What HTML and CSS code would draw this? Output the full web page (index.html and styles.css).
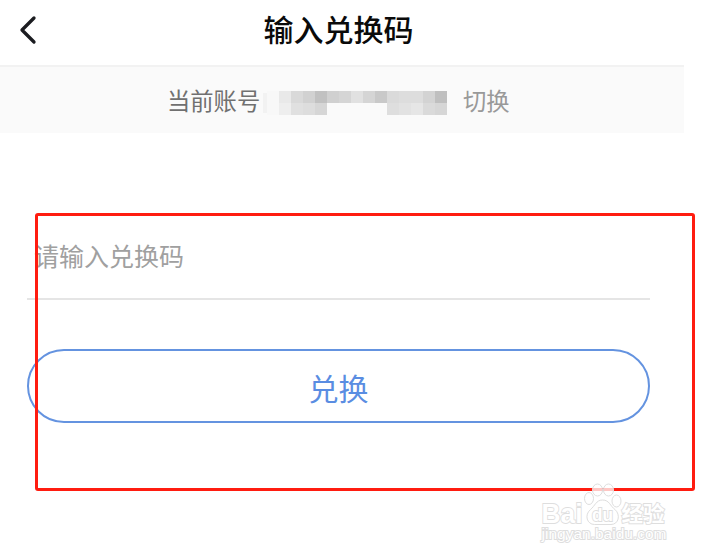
FILE: index.html
```html
<!DOCTYPE html>
<html lang="zh-CN">
<head>
  <meta charset="UTF-8">
  <meta name="viewport" content="width=device-width, initial-scale=1.0">
  <title>输入兑换码</title>
  <link rel="stylesheet" href="styles.css">
</head>
<body>
  <div class="page">
    <header class="header">
      <svg class="back" width="20" height="30" viewBox="0 0 20 30">
        <path d="M15 3 L3 15 L15 27" />
      </svg>
      <h1 class="title">输入兑换码</h1>
    </header>

    <div class="account">
      <span class="label">当前账号</span>
      <svg class="mosaic" width="184" height="24" shape-rendering="crispEdges">
        <rect x="0" y="2" width="4" height="20" fill="#f2f2f2" />
        <rect x="4" y="0" width="12" height="24" fill="#f8f8f8" />
        <rect x="16" y="0" width="12" height="12" fill="#e9e9e9" />
        <rect x="28" y="0" width="12" height="12" fill="#d9d9d9" />
        <rect x="40" y="0" width="12" height="12" fill="#d1d1d1" />
        <rect x="52" y="0" width="12" height="12" fill="#c1c1c1" />
        <rect x="64" y="0" width="12" height="12" fill="#d0d0d0" />
        <rect x="76" y="0" width="12" height="12" fill="#d5d5d5" />
        <rect x="88" y="0" width="12" height="12" fill="#e1e1e1" />
        <rect x="100" y="0" width="12" height="12" fill="#d5d5d5" />
        <rect x="112" y="0" width="12" height="12" fill="#c9c9c9" />
        <rect x="124" y="0" width="12" height="12" fill="#dadada" />
        <rect x="136" y="0" width="24" height="12" fill="#dddddd" />
        <rect x="160" y="0" width="12" height="12" fill="#d3d3d3" />
        <rect x="172" y="0" width="12" height="12" fill="#bfbfbf" />
        <rect x="16" y="12" width="12" height="12" fill="#eeeeee" />
        <rect x="28" y="12" width="12" height="12" fill="#e0e0e0" />
        <rect x="40" y="12" width="12" height="12" fill="#dddddd" />
        <rect x="52" y="12" width="12" height="12" fill="#d6d6d6" />
        <rect x="124" y="12" width="12" height="12" fill="#dedede" />
        <rect x="136" y="12" width="12" height="12" fill="#e2e2e2" />
        <rect x="148" y="12" width="12" height="12" fill="#e6e6e6" />
        <rect x="160" y="12" width="12" height="12" fill="#dadada" />
        <rect x="172" y="12" width="12" height="12" fill="#d6d6d6" />
      </svg>
      <span class="switch">切换</span>
    </div>

    <main class="form">
      <div class="field">请输入兑换码</div>
      <div class="submit">兑换</div>
    </main>
  </div>

  <div class="highlight"></div>

  <svg class="watermark" width="136" height="70" viewBox="0 0 136 70">
    <ellipse cx="53" cy="20.500" rx="4.500" ry="6" />
    <ellipse cx="61.500" cy="12" rx="5" ry="6" />
    <ellipse cx="72.500" cy="12" rx="5" ry="6" />
    <ellipse cx="80.500" cy="23" rx="4.500" ry="6" />
    <path d="M66.500 22 C60 22 59 28 54.500 31.500 C48 37 51 46.500 58.500 46.500 H75 C82.500 46.500 85 37 79 31.500 C74 28 73.500 22 66.500 22 Z" />
    <text class="brand" x="5.500" y="45" textLength="41" lengthAdjust="spacingAndGlyphs">Bai</text>
    <text class="du" x="56" y="43" textLength="21" lengthAdjust="spacingAndGlyphs">du</text>
    <text class="jingyan" x="85.500" y="43" textLength="43" lengthAdjust="spacingAndGlyphs">经验</text>
    <text class="url" x="5.500" y="60.500" textLength="125" lengthAdjust="spacingAndGlyphs">jingyan.baidu.com</text>
  </svg>
</body>
</html>
```

FILE: styles.css
```css
body {
  margin: 0;
  background: #fff;
  font-family: "Noto Sans CJK SC", sans-serif;
  overflow: hidden;
}

.page {
  width: 684px;
}

/* top bar */
.header {
  display: grid;
  grid-template-columns: 50px 1fr 56px;
  align-items: center;
  height: 65px;
  padding-bottom: 6px;
  box-sizing: border-box;
}

.back {
  margin-left: 19px;
  fill: none;
  stroke: #1b1c20;
  stroke-width: 3.3;
  stroke-linecap: round;
  stroke-linejoin: round;
}

.title {
  margin: 0 1px 4px 0;
  font-size: 30px;
  font-weight: 500;
  line-height: 40px;
  text-align: center;
  color: #0a0a0a;
}

.account {
  display: flex;
  align-items: center;
  height: 68px;
  padding-left: 167px;
  box-sizing: border-box;
  border-top: 2px solid #f2f2f2;
  background: #fafafa;
  font-size: 23.3px;
  line-height: 34px;
}

.label {
  width: 96px;
  color: #707070;
}

.mosaic {
  margin: 6px 16px 0 0;
}

.switch {
  color: #999;
}

/* code form */
.form {
  width: 623px;
  margin: 104px 0 0 27px;
}

.field {
  height: 63px;
  padding-left: 7px;
  box-sizing: border-box;
  border-bottom: 2px solid #e5e5e5;
  font-size: 25px;
  line-height: 36px;
  color: #a0a0a0;
}

.submit {
  height: 74px;
  margin-top: 49px;
  box-sizing: border-box;
  border: 2px solid #6493e0;
  border-radius: 37px;
  font-size: 30px;
  line-height: 73px;
  text-align: center;
  color: #5a8de2;
}

.highlight {
  position: absolute;
  left: 35px;
  top: 213px;
  width: 660px;
  height: 278px;
  box-sizing: border-box;
  border: 3px solid #ff1c10;
  border-radius: 3px;
}

/* logo in the corner */
.watermark {
  position: absolute;
  left: 536px;
  top: 478px;
  fill: rgba(255, 255, 255, 0.75);
  stroke: #dedede;
  stroke-width: 1;
}

.watermark text {
  font-family: "Liberation Sans", "Noto Sans CJK SC", sans-serif;
  font-weight: bold;
  fill: #fff;
  paint-order: stroke;
  stroke-width: 1.8;
}

.watermark .brand {
  font-size: 28px;
}

.watermark .du {
  font-size: 18px;
}

.watermark .jingyan {
  font-size: 21px;
}

.watermark .url {
  font-size: 14px;
  font-weight: normal;
}
```
